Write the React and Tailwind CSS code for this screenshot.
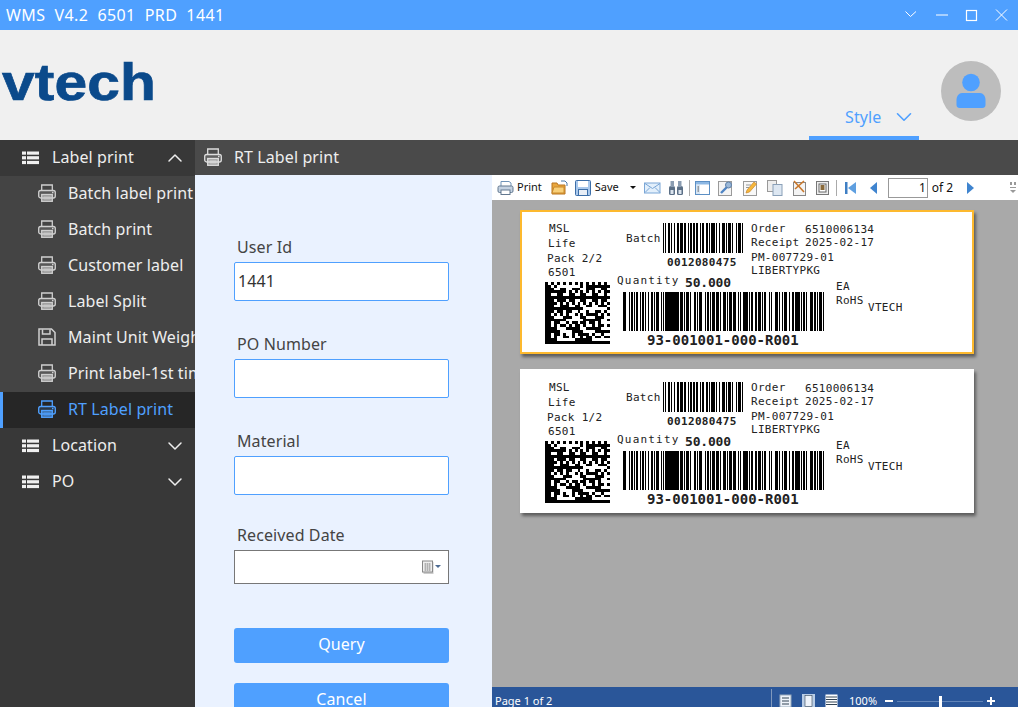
import { ChevronDown, ChevronUp } from "lucide-react";

// widths of bar, gap, bar, gap... read off the label, scaled to the printed width
const QTY_BARS = [3,2,1,1,2,1,1,1,2,1,1,1,2,1,1,2,1,1,2,1,1,1,3,1,1,1,1,1,13,1,2,1,1,1,3,1,1,2,2,1,1,1,3,2,1,1,2,1,1,1,2,1,3,1,1,2,2,1,1,1,3,1,2,2,1,1,1,2,4,1,1,1,2,2,1,1,3,1,1,1,2,2,1,1,1,3,2,1,1,2,1,1,3,1,1,2,2,1,4,1,1,1,2,1,1,2,3,1,2,1,1,1,2,1,1,1];
const BATCH_BARS = [1,1,1,1,2,1,1,2,1,1,2,1,3,1,1,2,1,1,2,1,1,1,2,2,1,1,1,2,2,1,1,1,3,1,1,2,1,1,3,1,1,1,2,1,1,3,1,1,2,1,1];

const DM_SIZE = 22;

// the module pattern is not meant to scan, only to read like the printed one
function dmCell(x, y) {
  if (x === 0 || y === DM_SIZE - 1) return true;
  if (y === 0) return x % 2 === 0;
  if (x === DM_SIZE - 1) return y % 2 === 1;
  const h = (Math.floor(x / 2) * 73 + Math.floor(y / 2) * 151 + x * y * 17 + x * 5 + y * 11) % 23;
  return h < 13;
}

function Bars({ bars, width, height, className }) {
  let x = 0;
  const rects = [];
  bars.forEach((w, i) => {
    if (i % 2 === 0) rects.push(<rect key={i} x={x} y={0} width={w} height={height} fill="#000" />);
    x += w;
  });
  return (
    <svg width={width} height={height} viewBox={`0 0 ${x} ${height}`} preserveAspectRatio="none" shapeRendering="crispEdges" className={className}>
      {rects}
    </svg>
  );
}

function DataMatrix({ className }) {
  const cells = [];
  for (let y = 0; y < DM_SIZE; y++) {
    for (let x = 0; x < DM_SIZE; x++) {
      if (dmCell(x, y)) cells.push(<rect key={`${x}-${y}`} x={x} y={y} width={1} height={1} fill="#000" />);
    }
  }
  return (
    <svg width={65} height={62} viewBox={`0 0 ${DM_SIZE} ${DM_SIZE}`} preserveAspectRatio="none" shapeRendering="crispEdges" className={className}>
      {cells}
    </svg>
  );
}

function T({ x, y, children, className = "tracking-[0.3px]" }) {
  return (
    <span className={`absolute whitespace-nowrap leading-[14px] text-[11px] text-[#222] font-['DejaVu_Sans_Mono',monospace] ${className}`} style={{ left: x, top: y }}>
      {children}
    </span>
  );
}

function Label({ pack, highlighted }) {
  return (
    <div className={`relative h-[144px] w-[454px] shrink-0 bg-white shadow-[2px_3px_3px_rgba(0,0,0,0.45)] ${highlighted ? "border-2 border-[#fdb92e]" : ""}`}>
      <div className={`absolute ${highlighted ? "-left-[2px] -top-[2px]" : "left-0 top-0"} h-[144px] w-[454px]`}>
        <T x={29} y={12}>MSL</T>
        <T x={28} y={27}>Life</T>
        <T x={27} y={42}>Pack {pack}</T>
        <T x={28} y={56}>6501</T>
        <T x={106} y={22}>Batch</T>
        <Bars bars={BATCH_BARS} width={80} height={30} className="absolute left-[143px] top-[13px]" />
        <T x={147} y={46} className="font-bold tracking-[0.35px] text-[#000]">0012080475</T>
        <T x={97} y={64} className="tracking-[1.2px]">Quantity</T>
        <T x={165} y={66} className="text-[13px] font-bold tracking-[-0.2px] text-[#000]">50.000</T>
        <DataMatrix className="absolute left-[25px] top-[72px]" />
        <Bars bars={QTY_BARS} width={202} height={39} className="absolute left-[103px] top-[82px]" />
        <T x={127} y={123} className="text-[14px] font-bold tracking-[0px] text-[#000]">93-001001-000-R001</T>
        <T x={231} y={12}>Order</T>
        <T x={285} y={13}>6510006134</T>
        <T x={231} y={26}>Receipt</T>
        <T x={285} y={26}>2025-02-17</T>
        <T x={231} y={41}>PM-007729-01</T>
        <T x={231} y={54}>LIBERTYPKG</T>
        <T x={316} y={70}>EA</T>
        <T x={316} y={84}>RoHS</T>
        <T x={348} y={91}>VTECH</T>
      </div>
    </div>
  );
}

function ListIcon({ className }) {
  return (
    <svg width="17" height="14" viewBox="0 0 17 14" className={className} fill="currentColor">
      <rect x="0" y="0.5" width="4" height="3.2" />
      <rect x="5" y="0.5" width="12" height="3.2" />
      <rect x="0" y="5.2" width="4" height="3.2" />
      <rect x="5" y="5.2" width="12" height="3.2" />
      <rect x="0" y="9.9" width="4" height="3.2" />
      <rect x="5" y="9.9" width="12" height="3.2" />
    </svg>
  );
}

function PrinterIcon({ className }) {
  return (
    <svg width="18" height="18" viewBox="0 0 18 18" className={className} fill="none" stroke="currentColor" strokeWidth="1.3">
      <path d="M3.700 6.500V1h10.600v5.500" />
      <rect x="0.700" y="6.500" width="16.600" height="7.500" rx="2" fill="currentColor" fillOpacity="0.15" />
      <rect x="3.700" y="10.500" width="10.600" height="6.800" fill="currentColor" fillOpacity="0.55" />
      <path d="M5.500 13h7M5.500 15h7" strokeWidth="0.8" />
      <path d="M14 8.500h1.500" />
    </svg>
  );
}

function FloppyIcon({ className }) {
  return (
    <svg width="18" height="18" viewBox="0 0 18 18" className={className} fill="none" stroke="currentColor" strokeWidth="1.5">
      <path d="M1 1h12.500L17 4.500V17H1z" />
      <path d="M4.500 1.500v4.500h7.500V1.500" />
      <path d="M4 17v-6h10v6" />
    </svg>
  );
}

function SubItem({ label, icon: Icon = PrinterIcon, active }) {
  return (
    <div className={`flex h-9 items-center overflow-hidden whitespace-nowrap pb-[2px] ${active ? "border-l-[3px] border-[#4fa0ff] bg-[#262626] pl-[35px] text-[#4fa0ff]" : "pl-[38px] text-[#eee]"}`}>
      <Icon className={`mr-[12px] shrink-0 ${active ? "text-[#4fa0ff]" : "text-[#cfcfcf]"}`} />
      <span>{label}</span>
    </div>
  );
}

function GroupItem({ label, open }) {
  const Chevron = open ? ChevronUp : ChevronDown;
  return (
    <div className="flex h-9 items-center pl-[22px] pr-[8px] text-[#eee]">
      <ListIcon className="mr-[13px] shrink-0 text-[#f0f0f0]" />
      <span className="flex-1 pb-[2px]">{label}</span>
      <Chevron size={24} strokeWidth={1.5} />
    </div>
  );
}

function Field({ label, value, spacing }) {
  return (
    <div className={spacing}>
      <div className="mb-[3px] h-[24px] pl-[3px] leading-[24px] text-[#444]">{label}</div>
      <div className="flex h-[39px] items-center rounded-[2px] border border-[#4fa0ff] bg-white px-[3px] pb-[2px] text-[#333]">{value}</div>
    </div>
  );
}

function CalendarIcon() {
  return (
    <svg width="20" height="14" viewBox="0 0 20 14">
      <rect x="1.500" y="2" width="10" height="12" fill="#ccc" />
      <rect x="0.500" y="1" width="10" height="11" fill="#eee" stroke="#888" />
      <path d="M2 4h7M2 6h7M2 8h7M2 10h7M3.500 3v8M5.500 3v8M7.500 3v8" stroke="#aaa" strokeWidth="0.8" />
      <path d="M13 5h6l-3 3z" fill="#4c6a92" />
    </svg>
  );
}

// small toolbar pictures of the report viewer
function Tool({ children, w = 18 }) {
  return <svg width={w} height="16" viewBox={`0 0 ${w} 16`} className="shrink-0">{children}</svg>;
}

function Sep() {
  return <div className="mx-[5px] h-[16px] w-px shrink-0 bg-[#aaa]" />;
}

function Toolbar() {
  return (
    <div className="flex h-[25px] shrink-0 items-center bg-white pl-[5px] text-[11px] tracking-normal text-[#111]">
      <Tool w={17}>
        <path d="M4 6V1.500h8L14 3v3" fill="#fff" stroke="#6f93b8" />
        <rect x="1" y="6" width="15" height="6.500" rx="1.500" fill="#c4d2e2" stroke="#63788f" />
        <rect x="4" y="10" width="9" height="4.500" fill="#fff" stroke="#63788f" />
      </Tool>
      <span className="ml-[3px]">Print</span>
      <div className="ml-[9px]">
        <Tool w={17}>
          <path d="M1 3h5l1 2h7v9H1z" fill="#e9a63c" stroke="#b87420" />
          <path d="M3 7h10v6H1z" fill="#f8cf78" stroke="#c98a2c" />
          <path d="M10 1h4l2 2v3" fill="none" stroke="#4a78a8" />
        </Tool>
      </div>
      <div className="ml-[7px]">
        <Tool w={16}>
          <rect x="0.500" y="0.500" width="15" height="15" rx="1" fill="#a9c8ec" stroke="#3c6ea8" />
          <rect x="3" y="1" width="10" height="6" fill="#fff" />
          <rect x="3.500" y="9.500" width="9" height="6" fill="#e8eef6" stroke="#3c6ea8" />
        </Tool>
      </div>
      <span className="ml-[4px]">Save</span>
      <div className="ml-[11px] h-0 w-0 border-x-[3px] border-t-[3px] border-x-transparent border-t-[#111]" />
      <div className="ml-[8px]">
        <Tool w={17}>
          <rect x="0.500" y="3" width="15.500" height="10" fill="#e2effb" stroke="#7aa6d6" />
          <path d="M1 3.500l7.500 5 7.500-5M1 12.500l5-5M16 12.500l-5-5" fill="none" stroke="#7aa6d6" />
        </Tool>
      </div>
      <div className="ml-[7px]">
        <Tool w={16}>
          <rect x="1" y="6" width="6" height="9" rx="1.500" fill="#5b6f86" />
          <rect x="9" y="6" width="6" height="9" rx="1.500" fill="#5b6f86" />
          <rect x="2.500" y="1" width="3.500" height="6" fill="#8b9db2" />
          <rect x="10" y="1" width="3.500" height="6" fill="#8b9db2" />
          <rect x="2.500" y="10" width="3" height="4" fill="#dbe4ee" />
          <rect x="10.500" y="10" width="3" height="4" fill="#dbe4ee" />
        </Tool>
      </div>
      <Sep />
      <Tool w={15}>
        <rect x="0.500" y="1.500" width="14" height="13" fill="#fff" stroke="#5c8fc4" />
        <rect x="1" y="2" width="13" height="2.500" fill="#8db8e4" />
        <rect x="1" y="5" width="4" height="9" fill="#d8e6f4" />
        <path d="M2.500 7h1.500M2.500 9h1.500M2.500 11h1.500" stroke="#555" />
      </Tool>
      <div className="ml-[8px]">
        <Tool w={15}>
          <rect x="0.500" y="1.500" width="13" height="14" fill="#f4f4f4" stroke="#9a9a9a" />
          <path d="M3 13l6-6" stroke="#4f84c4" strokeWidth="2.400" />
          <circle cx="10.500" cy="5" r="3" fill="#9bb8d8" stroke="#5c7fa8" />
        </Tool>
      </div>
      <div className="ml-[10px]">
        <Tool w={15}>
          <rect x="0.500" y="1.500" width="13" height="14" fill="#f8f8f8" stroke="#9a9a9a" />
          <path d="M3 13l1-3 7-8 2.500 2-7 8z" fill="#f6b73c" stroke="#c9862a" strokeWidth="0.700" />
          <path d="M3 5h5M3 7.500h3" stroke="#999" />
        </Tool>
      </div>
      <div className="ml-[9px]">
        <Tool w={16}>
          <rect x="0.500" y="0.500" width="9" height="11" fill="#eee" stroke="#999" />
          <rect x="6" y="4.500" width="9" height="11" fill="#dde7f2" stroke="#8aa0b8" />
        </Tool>
      </div>
      <div className="ml-[9px]">
        <Tool w={15}>
          <rect x="1.500" y="2.500" width="12" height="13" fill="#f4f4f4" stroke="#888" />
          <path d="M2 1l10 11M12 1L3 9" stroke="#c9772a" strokeWidth="1.600" />
        </Tool>
      </div>
      <div className="ml-[9px]">
        <Tool w={15}>
          <rect x="0.500" y="1.500" width="12" height="13" fill="#eee" stroke="#777" />
          <rect x="3" y="4" width="7" height="8" fill="#fff" stroke="#666" />
          <rect x="4.500" y="5" width="4" height="5" fill="#8a6a3a" />
        </Tool>
      </div>
      <Sep />
      <div className="ml-[2px]">
        <Tool w={13}>
          <rect x="1" y="2" width="2.500" height="12" fill="#3f7fc4" />
          <path d="M12 2v12L4 8z" fill="#5f9fe0" />
        </Tool>
      </div>
      <div className="ml-[12px]">
        <Tool w={9}>
          <path d="M8 2v12L1 8z" fill="#3f84cf" />
        </Tool>
      </div>
      <div className="ml-[10px] flex h-[20px] w-[40px] items-center justify-end border border-[#999] pr-[1px] text-[12px] text-[#111]">1</div>
      <span className="ml-[4px] text-[12px]">of 2</span>
      <div className="ml-[13px]">
        <Tool w={9}>
          <path d="M1 2v12l7-6z" fill="#3f84cf" />
        </Tool>
      </div>
      <div className="ml-auto mr-[2px] flex w-[6px] flex-col gap-[2px]">
        <div className="h-[3px] border-x-[2px] border-x-[#999]" />
        <div className="h-px bg-[#999]" />
        <div className="h-0 w-0 border-x-[3px] border-t-[3px] border-x-transparent border-t-[#999]" />
      </div>
    </div>
  );
}

function StatusBar() {
  return (
    <div className="flex h-[20px] shrink-0 items-center overflow-hidden bg-[#2a5699] pt-[8px] text-[11px] tracking-normal text-white">
      <span className="ml-[3px] w-[276px]">Page 1 of 2</span>
      <div className="-mt-[6px] w-px self-stretch bg-[#7f98bd]" />
      <div className="ml-[7px] flex items-center gap-[10px]">
        <Tool w={13}>
          <rect x="1" y="2" width="11" height="12" fill="#eef3fa" stroke="#9ab" />
          <path d="M3 5h7M3 8h7M3 11h7" stroke="#345" />
        </Tool>
        <Tool w={13}>
          <rect x="0" y="1" width="13" height="14" fill="#b9cde6" />
          <rect x="3" y="2.500" width="7" height="11" fill="#eef3fa" stroke="#345" strokeWidth="0.600" />
        </Tool>
        <Tool w={13}>
          <rect x="0.500" y="1.500" width="12" height="13" fill="#fff" />
          <path d="M1 4h11M1 6.500h11M1 9h11M1 11.500h11" stroke="#345" />
        </Tool>
      </div>
      <span className="ml-[11px]">100%</span>
      <div className="ml-[8px] h-[2px] w-[8px] bg-white" />
      <div className="relative mx-[4px] h-px w-[86px] bg-[#5f83b8]">
        <div className="absolute left-[42px] -top-[5px] h-[11px] w-[3px] bg-white" />
      </div>
      <div className="relative h-[2px] w-[8px] bg-white">
        <div className="absolute left-[3px] -top-[3px] h-[8px] w-[2px] bg-white" />
      </div>
    </div>
  );
}

export default function App() {
  return (
    <div className="flex h-[707px] w-[1018px] flex-col overflow-hidden bg-white text-[16px] font-['Noto_Sans','Open_Sans',sans-serif] tracking-[0.1px]">
      {/* title bar */}
      <div className="flex h-[30px] shrink-0 items-center bg-[#4fa0ff] pl-[6px] pr-[4px] text-white">
        <span className="flex-1 whitespace-pre tracking-[0.4px]">WMS  V4.2  6501  PRD  1441</span>
        <svg width="110" height="14" viewBox="0 0 110 14" fill="none" stroke="#fff" strokeWidth="1">
          <path d="M1.500 3.500L6.500 8.500L12 3.500" />
          <path d="M32 7H44" />
          <rect x="62.500" y="2.500" width="10" height="10" strokeWidth="1.200" />
          <path d="M92 1.500L103 12.500M103 1.500L92 12.500" />
        </svg>
      </div>

      {/* logo row */}
      <div className="flex h-[110px] shrink-0 items-stretch bg-[#f0f0f0]">
        <div className="flex-1 pl-[1px] pt-[15px]">
          <svg width="160" height="64" viewBox="0 0 160 64">
            <text x="1" y="55" fontFamily="Liberation Sans" fontWeight="700" fontSize="52" textLength="154" lengthAdjust="spacingAndGlyphs" fill="#0b4a8b" stroke="#0b4a8b" strokeWidth="0.7">vtech</text>
          </svg>
        </div>
        <div className="mr-[22px] mt-auto flex h-[43px] w-[110px] flex-col border-b-[4px] border-[#4fa0ff] text-[#4fa0ff]">
          <div className="flex flex-1 items-center pl-[36px]">
            <span>Style</span>
            <ChevronDown size={26} strokeWidth={1.5} className="ml-[10px]" />
          </div>
        </div>
        <div className="mr-[17px] mt-[31px] flex h-[60px] w-[60px] items-center justify-center rounded-full bg-[#bdbdbd]">
          <svg width="30" height="36" viewBox="0 0 30 36" fill="#4fa0ff">
            <circle cx="15" cy="9.500" r="8.800" />
            <path d="M6 20h18c3 0 5.500 3 5.500 7v5c0 2-1.500 3-3 3H3.500c-1.500 0-3-1-3-3v-5c0-4 2.500-7 5.500-7z" />
          </svg>
        </div>
      </div>

      <div className="flex min-h-0 flex-1">
        {/* sidebar */}
        <div className="w-[195px] shrink-0 bg-[#383838]">
          <GroupItem label="Label print" open />
          <div className="bg-[#444]">
            <SubItem label="Batch label print" />
            <SubItem label="Batch print" />
            <SubItem label="Customer label" />
            <SubItem label="Label Split" />
            <SubItem label="Maint Unit Weight" icon={FloppyIcon} />
            <SubItem label="Print label-1st time" />
            <SubItem label="RT Label print" active />
          </div>
          <GroupItem label="Location" />
          <GroupItem label="PO" />
        </div>

        <div className="flex min-w-0 flex-1 flex-col">
          <div className="flex h-[35px] shrink-0 items-center bg-[#4a4a4a] pb-[2px] pl-[9px] text-[#eee]">
            <PrinterIcon className="mr-[12px] text-[#ddd]" />
            <span>RT Label print</span>
          </div>

          <div className="flex min-h-0 flex-1">
            {/* query form */}
            <div className="w-[297px] shrink-0 overflow-hidden bg-[#eaf2ff] pl-[39px] pr-[43px] pt-[60px]">
              <Field label="User Id" value="1441" />
              <Field label="PO Number" spacing="mt-[31px]" />
              <Field label="Material" spacing="mt-[31px]" />
              <div className="mt-[28px]">
                <div className="mb-[3px] h-[24px] pl-[3px] leading-[24px] text-[#444]">Received Date</div>
                <div className="flex h-[34px] items-center justify-end border border-[#777] bg-white pr-[6px]">
                  <CalendarIcon />
                </div>
              </div>
              <div className="mt-[44px] flex h-[35px] items-center justify-center rounded-[3px] bg-[#4fa0ff] pb-[3px] text-white">Query</div>
              <div className="mt-[20px] flex h-[35px] items-center justify-center rounded-[3px] bg-[#4fa0ff] pb-[3px] text-white">Cancel</div>
            </div>

            {/* report viewer */}
            <div className="flex min-w-0 flex-1 flex-col">
              <Toolbar />
              <div className="flex min-h-0 flex-1 flex-col gap-[15px] bg-[#a9a9a9] pl-[28px] pt-[10px]">
                <Label pack="2/2" highlighted />
                <Label pack="1/2" />
              </div>
              <StatusBar />
            </div>
          </div>
        </div>
      </div>
    </div>
  );
}
